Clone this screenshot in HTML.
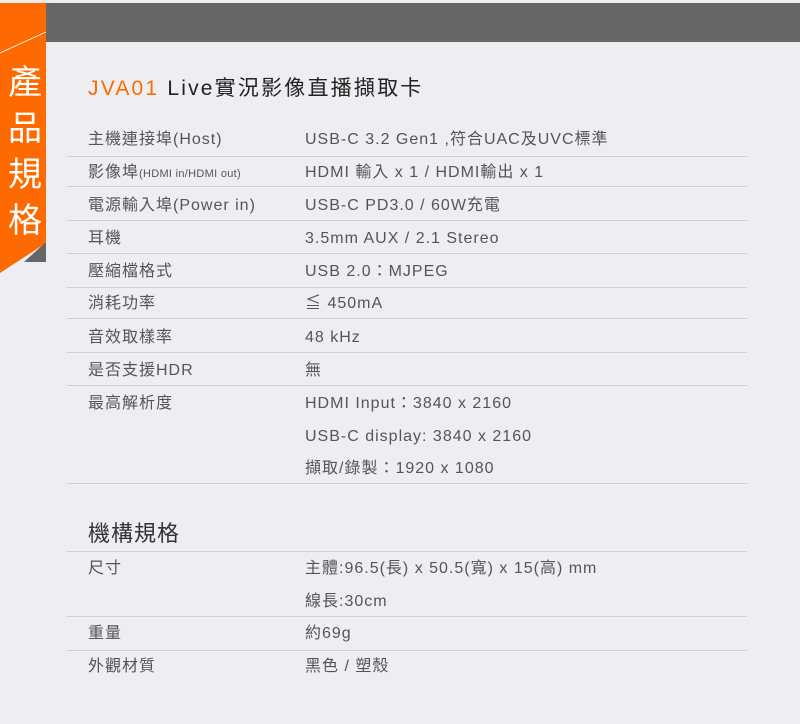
<!DOCTYPE html>
<html><head><meta charset="utf-8"><style>
body{margin:0;width:800px;height:724px;background:#eeeef2;position:relative;overflow:hidden;font-family:"Liberation Sans","Noto Sans CJK TC",sans-serif;}
.t{position:absolute;font-size:16px;color:#555;white-space:nowrap;line-height:20px;letter-spacing:1px}
.l{position:absolute;left:67px;width:680px;height:1px;background:#cfcfd4}
.s{font-size:11px;letter-spacing:0.3px}
</style></head><body>
<div style="position:absolute;left:46px;top:3px;width:754px;height:39px;background:#666"></div>
<svg style="position:absolute;left:0;top:0" width="50" height="280">
<polygon points="0,3 46,3 46,243 0,273" fill="#ff6a00"/>
<polygon points="46,242 46,262 24,262" fill="#666"/>
<line x1="0" y1="53" x2="46" y2="32" stroke="#fff" stroke-width="0.8"/>
</svg>
<div style="position:absolute;left:6px;top:60px;width:38px;color:#fff;font-size:34px;line-height:46px;text-align:center">產<br>品<br>規<br>格</div>
<div class="t" style="left:88px;top:77px;font-size:21px;line-height:24px;color:#222;letter-spacing:2.2px"><span style="color:#ff6a00">JVA01</span> Live實況影像直播擷取卡</div>

<div class="t" style="left:88px;top:130px">主機連接埠(Host)</div><div class="t" style="left:305px;top:130px">USB-C 3.2 Gen1 ,符合UAC及UVC標準</div>
<div class="l" style="top:156px"></div>
<div class="t" style="left:88px;top:163px">影像埠<span class="s">(HDMI in/HDMI out)</span></div><div class="t" style="left:305px;top:163px">HDMI 輸入 x 1 / HDMI輸出 x 1</div>
<div class="l" style="top:186px"></div>
<div class="t" style="left:88px;top:196px">電源輸入埠(Power in)</div><div class="t" style="left:305px;top:196px">USB-C PD3.0 / 60W充電</div>
<div class="l" style="top:220px"></div>
<div class="t" style="left:88px;top:229px">耳機</div><div class="t" style="left:305px;top:229px">3.5mm AUX / 2.1 Stereo</div>
<div class="l" style="top:253px"></div>
<div class="t" style="left:88px;top:262px">壓縮檔格式</div><div class="t" style="left:305px;top:262px">USB 2.0：MJPEG</div>
<div class="l" style="top:287px"></div>
<div class="t" style="left:88px;top:294px">消耗功率</div><div class="t" style="left:305px;top:294px">≦ 450mA</div>
<div class="l" style="top:318px"></div>
<div class="t" style="left:88px;top:328px">音效取樣率</div><div class="t" style="left:305px;top:328px">48 kHz</div>
<div class="l" style="top:352px"></div>
<div class="t" style="left:88px;top:361px">是否支援HDR</div><div class="t" style="left:305px;top:361px">無</div>
<div class="l" style="top:385px"></div>
<div class="t" style="left:88px;top:394px">最高解析度</div><div class="t" style="left:305px;top:394px">HDMI Input：3840 x 2160</div>
<div class="t" style="left:305px;top:427px">USB-C display: 3840 x 2160</div>
<div class="t" style="left:305px;top:459px">擷取/錄製：1920 x 1080</div>
<div class="l" style="top:483px"></div>
<div class="t" style="left:88px;top:521px;font-size:22px;line-height:26px;color:#333">機構規格</div>
<div class="l" style="top:551px"></div>
<div class="t" style="left:88px;top:559px">尺寸</div><div class="t" style="left:305px;top:559px">主體:96.5(長) x 50.5(寬) x 15(高) mm</div>
<div class="t" style="left:305px;top:592px">線長:30cm</div>
<div class="l" style="top:616px"></div>
<div class="t" style="left:88px;top:624px">重量</div><div class="t" style="left:305px;top:624px">約69g</div>
<div class="l" style="top:650px"></div>
<div class="t" style="left:88px;top:657px">外觀材質</div><div class="t" style="left:305px;top:657px">黑色 / 塑殼</div>
</body></html>
